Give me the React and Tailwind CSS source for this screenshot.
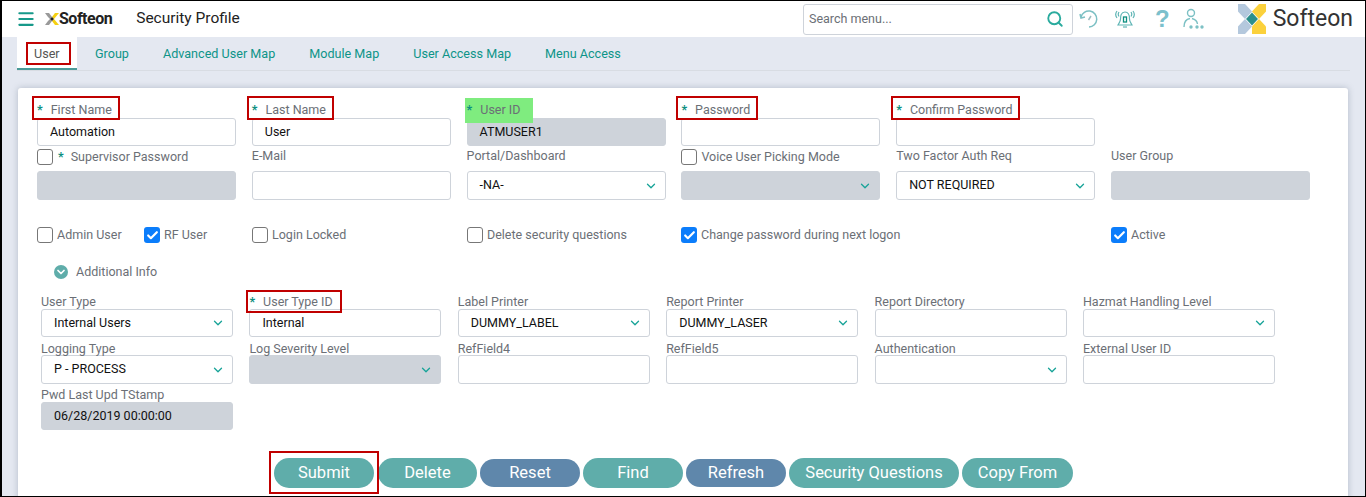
import React from 'react'
import { Search, ChevronDown, Check, Menu } from 'lucide-react'

const tabs = ['Group', 'Advanced User Map', 'Module Map', 'User Access Map', 'Menu Access']

const Star = () => <span className="text-[#0d8f80] font-bold mr-[8px]">*</span>

// mark: red frame or green highlight drawn over the label, as in the annotated shot
const Label = ({ children, star, mark, h = 'h-[17px]', lead = 'leading-[17px]', frame = '-left-[5px] -right-[5px] -top-[5px] -bottom-[2px]' }) => (
  <div className={`${h} ${lead} text-[12.5px] text-[#6b6f76] whitespace-nowrap`}>
    <span
      className={`inline-block ${mark === 'red' ? 'relative pr-[3px]' : ''} ${mark === 'green' ? 'relative z-10 -ml-[2px] pl-[2px] pr-[13px] -mt-[3px] pt-[3px] pb-[5px] bg-[#7fec7f]' : ''}`}
    >
      {star && <Star />}
      {children}
      {mark === 'red' && <span className={`absolute ${frame} border-2 border-[#c00000]`} />}
    </span>
  </div>
)

const Input = ({ value, disabled, h = 'h-[29px]' }) => (
  <div
    className={`${h} rounded-[3px] border flex items-center px-[12px] text-[12.5px] text-[#111] ${disabled ? 'bg-[#ced3da] border-[#ced3da]' : 'bg-white border-[#ced3da]'}`}
  >
    {value}
  </div>
)

const Select = ({ value, disabled, h = 'h-[29px]' }) => (
  <div
    className={`${h} rounded-[3px] border flex items-center justify-between pl-[12px] pr-[7px] text-[12.5px] text-[#111] ${disabled ? 'bg-[#ced3da] border-[#ced3da]' : 'bg-white border-[#ced3da]'}`}
  >
    <span>{value}</span>
    <ChevronDown className="w-[14px] h-[14px] text-[#17a398]" strokeWidth={2.25} />
  </div>
)

const Box = ({ checked }) =>
  checked ? (
    <span className="w-[16px] h-[16px] rounded-[3px] bg-[#0b7dfb] flex items-center justify-center shrink-0">
      <Check className="w-[13px] h-[13px] text-white" strokeWidth={4} />
    </span>
  ) : (
    <span className="w-[16px] h-[16px] rounded-[3px] border border-[#777] bg-white shrink-0" />
  )

const CheckLabel = ({ checked, children, className = '' }) => (
  <div className={`flex items-center gap-[4px] text-[12.5px] text-[#6b6f76] whitespace-nowrap ${className}`}>
    <Box checked={checked} />
    <span>{children}</span>
  </div>
)

const Pill = ({ children, blue, w }) => (
  <div
    className={`${w} rounded-full flex items-center justify-center text-white text-[16.5px] ${blue ? 'h-[28px] bg-[#5f87ab]' : 'h-[30px] bg-[#5fadaa]'}`}
  >
    {children}
  </div>
)

const LogoMark = ({ className }) => (
  <svg viewBox="0 0 28 28" className={className} preserveAspectRatio="none">
    <polygon points="0,0 7,0 14,7 7,14 0,7" fill="#b4c8dd" />
    <polygon points="21,0 28,0 28,7 21,14 14,7" fill="#fbd13c" />
    <polygon points="0,21 7,14 14,21 7,28 0,28" fill="#b4c8dd" />
    <polygon points="21,14 28,21 28,28 14,28 14,21" fill="#fbd13c" />
    <polygon points="14,8 20,14 14,20 8,14" fill="#2b8f8c" />
  </svg>
)

const SmallMark = () => (
  <svg viewBox="0 0 14 14" className="w-[14px] h-[14px]">
    <polygon points="0,1 4,1 7,5 5,7 3,5" fill="#999" />
    <polygon points="0,13 3,9 5,7 7,9 4,13" fill="#999" />
    <polygon points="10,1 14,1 9,7 7,5" fill="#f5d010" />
    <polygon points="9,7 14,13 10,13 7,9" fill="#f5d010" />
    <polygon points="5,7 7,5 9,7 7,9" fill="#222" />
  </svg>
)

const HeaderIcons = () => (
  <div className="flex items-center">
    <svg viewBox="0 0 20 20" className="w-[20px] h-[20px] ml-[6px]" fill="none" stroke="#7cc0c4" strokeWidth="1.5">
      <path d="M2 8 A8 8 0 1 1 10 18" />
      <path d="M1 5 L2 9 L6 8" />
      <path d="M12 7 L9.5 11" stroke="#9bbcc0" />
    </svg>
    <svg viewBox="0 0 22 22" className="w-[22px] h-[22px] ml-[15px]" fill="none" stroke="#5fb5b5" strokeWidth="1.2">
      <path d="M11 4 C7 4 6.5 8 6.5 11 C6.5 14 5 15 4 17 L18 17 C17 15 15.5 14 15.5 11 C15.5 8 15 4 11 4 Z" />
      <path d="M9 19 L13 19" />
      <path d="M3 3 C1.5 5 1.5 8 3 10 M5 4 C4 5.5 4 7 5 8.5 M19 3 C20.5 5 20.5 8 19 10 M17 4 C18 5.5 18 7 17 8.5" />
      <rect x="9.5" y="9" width="3" height="5" stroke="#0d8f80" strokeWidth="1.3" />
    </svg>
    <span className="ml-[19px] text-[24px] leading-none font-bold text-[#7cc0cc]" style={{ fontFamily: 'Liberation Sans' }}>?</span>
    <svg viewBox="0 0 22 22" className="w-[22px] h-[22px] ml-[12px]" fill="none" stroke="#7cc0c4" strokeWidth="1.4">
      <circle cx="9" cy="5" r="3.5" />
      <path d="M2 19 C2 13 5 11 8 10.5 M10 10.5 C12 11 15 12 15.5 16" />
      <circle cx="9" cy="19" r="1" fill="#7cc0c4" />
      <circle cx="15" cy="19" r="1" fill="#7cc0c4" />
      <circle cx="20" cy="19" r="1" fill="#7cc0c4" />
    </svg>
  </div>
)

export default function App() {
  return (
    <div className="w-[1366px] h-[497px] overflow-hidden bg-[#e4e8f1] border-l-2 border-t border-b border-r border-black" style={{ fontFamily: 'Roboto, sans-serif' }}>
      {/* Header */}
      <div className="h-[36px] bg-white flex items-center pl-[14px]">
        <Menu className="w-[20px] h-[20px] text-[#17998a]" strokeWidth={2.5} />
        <div className="flex items-center ml-[9px]">
          <SmallMark />
          <span className="text-[16px] font-bold tracking-[-0.5px] text-[#222]">Softeon</span>
        </div>
        <span className="ml-[24px] text-[15.5px] text-[#222]">Security Profile</span>
        <div className="ml-auto w-[270px] h-[31px] border border-[#ced3da] rounded-[3px] flex items-center justify-between pl-[5px] pr-[8px] text-[12.5px] text-[#6b6f76]">
          <span>Search menu...</span>
          <Search className="w-[18px] h-[18px] text-[#2aab9e]" strokeWidth={2.5} />
        </div>
        <HeaderIcons />
        <div className="flex items-center ml-[34px] mr-[12px]">
          <LogoMark className="w-[28px] h-[30px]" />
          <span className="ml-[7px] text-[23px] text-[#333]">Softeon</span>
        </div>
      </div>

      {/* Tabs */}
      <div className="mx-[15px] h-[34px] border-b border-[#d8dce3] flex items-stretch text-[12.6px]">
        <div className="w-[60px] bg-white border-b-2 border-[#4a9a98] flex items-center pl-[11px] text-[#555] pt-[2px]">
          <span className="pl-[6px] pr-[9px] leading-[19px] outline-2 outline-[#c00000]">User</span>
        </div>
        <div className="flex items-center gap-[34px] ml-[18px] pt-[2px] text-[#0d9488]">
          {tabs.map((t) => (
            <span key={t}>{t}</span>
          ))}
        </div>
      </div>

      {/* Form card */}
      <div className="mt-[17px] ml-[16px] w-[1330px] h-[420px] bg-white rounded-t-[3px] shadow-[0_0_6px_rgba(120,130,150,0.45)] pt-[13px]">
        <div className="pl-[19px] grid grid-cols-[repeat(6,199px)] gap-x-[15.8px]">
          <div>
            <Label star mark="red">First Name</Label>
            <Input value="Automation" h="h-[28px]" />
          </div>
          <div>
            <Label star mark="red">Last Name</Label>
            <Input value="User" h="h-[28px]" />
          </div>
          <div>
            <Label star mark="green">User ID</Label>
            <Input value="ATMUSER1" disabled h="h-[28px]" />
          </div>
          <div>
            <Label star mark="red">Password</Label>
            <Input h="h-[28px]" />
          </div>
          <div>
            <Label star mark="red">Confirm Password</Label>
            <Input h="h-[28px]" />
          </div>
          <div />

          <div className="mt-[1px]">
            <div className="h-[24px]">
              <div className="h-[20px] flex items-center text-[12.5px] text-[#6b6f76]">
                <Box />
                <span className="ml-[5px]"><Star /></span>
                <span className="-ml-[1px]">Supervisor Password</span>
              </div>
            </div>
            <Input disabled />
          </div>
          <div className="mt-[1px]">
            <div className="h-[24px]"><Label>E-Mail</Label></div>
            <Input />
          </div>
          <div className="mt-[1px]">
            <div className="h-[24px]"><Label>Portal/Dashboard</Label></div>
            <Select value="-NA-" />
          </div>
          <div className="mt-[1px]">
            <div className="h-[24px]">
              <div className="h-[20px] flex items-center gap-[4px] text-[12.5px] text-[#6b6f76]">
                <Box />
                <span>Voice User Picking Mode</span>
              </div>
            </div>
            <Select disabled />
          </div>
          <div className="mt-[1px]">
            <div className="h-[24px]"><Label>Two Factor Auth Req</Label></div>
            <Select value="NOT REQUIRED" />
          </div>
          <div className="mt-[1px]">
            <div className="h-[24px]"><Label>User Group</Label></div>
            <Input disabled />
          </div>
        </div>

        {/* Checkbox row */}
        <div className="pl-[19px] mt-[26px] grid grid-cols-[107px_108px_215px_214px_430px_199px] h-[18px] items-center">
          <CheckLabel>Admin User</CheckLabel>
          <CheckLabel checked>RF User</CheckLabel>
          <CheckLabel>Login Locked</CheckLabel>
          <CheckLabel>Delete security questions</CheckLabel>
          <CheckLabel checked>Change password during next logon</CheckLabel>
          <CheckLabel checked>Active</CheckLabel>
        </div>

        <div className="pl-[36px] mt-[19px] flex items-center gap-[8px] text-[12.5px] text-[#6b6f76] h-[18px]">
          <span className="w-[14px] h-[14px] rounded-full bg-[#5fadaa] flex items-center justify-center">
            <ChevronDown className="w-[12px] h-[12px] text-white" strokeWidth={3.5} />
          </span>
          <span>Additional Info</span>
        </div>

        {/* Additional info */}
        <div className="pl-[23px] mt-[11px] grid grid-cols-[repeat(6,192px)] gap-x-[16.4px]">
          <div>
            <Label lead="leading-[19px]">User Type</Label>
            <Select value="Internal Users" h="h-[28px]" />
          </div>
          <div>
            <Label star mark="red" lead="leading-[19px]" frame="-left-[3px] -right-[6px] -top-[2px] -bottom-[2px]">User Type ID</Label>
            <Input value="Internal" h="h-[28px]" />
          </div>
          <div>
            <Label lead="leading-[19px]">Label Printer</Label>
            <Select value="DUMMY_LABEL" h="h-[28px]" />
          </div>
          <div>
            <Label lead="leading-[19px]">Report Printer</Label>
            <Select value="DUMMY_LASER" h="h-[28px]" />
          </div>
          <div>
            <Label lead="leading-[19px]">Report Directory</Label>
            <Input h="h-[28px]" />
          </div>
          <div>
            <Label lead="leading-[19px]">Hazmat Handling Level</Label>
            <Select h="h-[28px]" />
          </div>

          <div className="mt-[2px]">
            <Label h="h-[16px]" lead="leading-[19px]">Logging Type</Label>
            <Select value="P - PROCESS" h="h-[29px]" />
          </div>
          <div className="mt-[2px]">
            <Label h="h-[16px]" lead="leading-[19px]">Log Severity Level</Label>
            <Select disabled h="h-[29px]" />
          </div>
          <div className="mt-[2px]">
            <Label h="h-[16px]" lead="leading-[19px]">RefField4</Label>
            <Input h="h-[29px]" />
          </div>
          <div className="mt-[2px]">
            <Label h="h-[16px]" lead="leading-[19px]">RefField5</Label>
            <Input h="h-[29px]" />
          </div>
          <div className="mt-[2px]">
            <Label h="h-[16px]" lead="leading-[19px]">Authentication</Label>
            <Select h="h-[29px]" />
          </div>
          <div className="mt-[2px]">
            <Label h="h-[16px]" lead="leading-[19px]">External User ID</Label>
            <Input h="h-[29px]" />
          </div>

          <div className="mt-[3px]">
            <Label h="h-[15px]" lead="leading-[15px]">Pwd Last Upd TStamp</Label>
            <Input value="06/28/2019 00:00:00" disabled h="h-[28px]" />
          </div>
        </div>

        {/* Buttons */}
        <div className="mt-[28px] pl-[256px] flex items-center gap-[3px]">
          <div className="relative mr-[1px]">
            <Pill w="w-[100px]">Submit</Pill>
            <div className="absolute -left-[5px] -right-[5px] -top-[7px] -bottom-[6px] border-2 border-[#c00000]" />
          </div>
          <Pill w="w-[99px]">Delete</Pill>
          <Pill blue w="w-[100px]">Reset</Pill>
          <Pill w="w-[100px]">Find</Pill>
          <Pill blue w="w-[100px]">Refresh</Pill>
          <Pill w="w-[170px]">Security Questions</Pill>
          <Pill w="w-[111px]">Copy From</Pill>
        </div>
      </div>
    </div>
  )
}
